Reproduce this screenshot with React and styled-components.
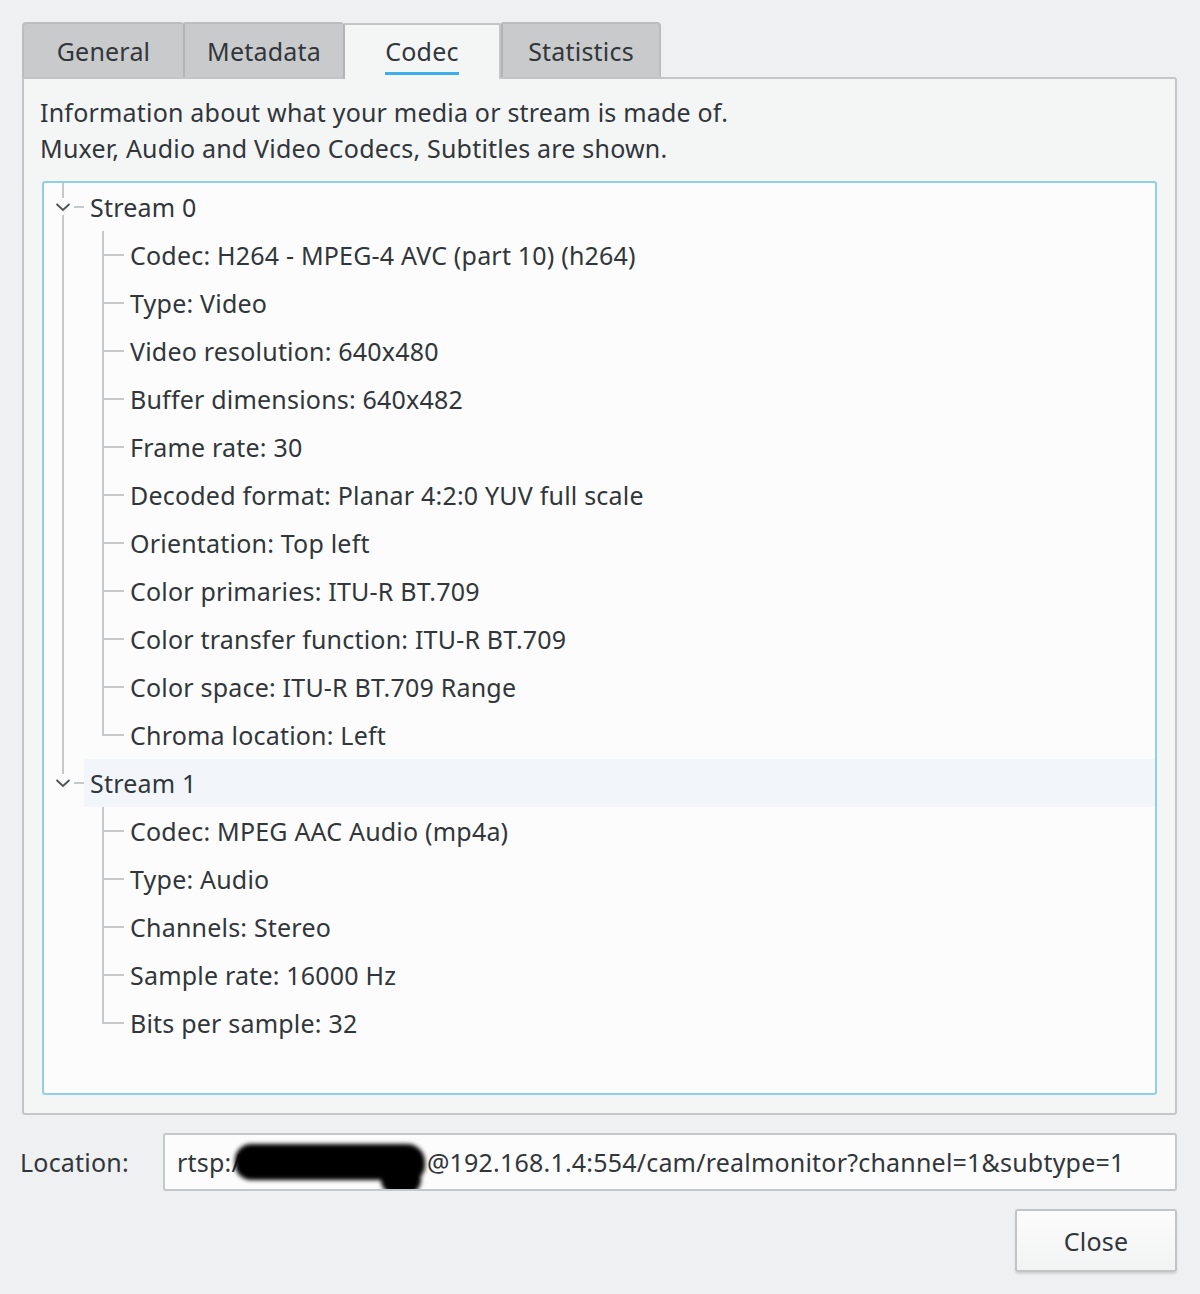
import React from 'react';
import styled, { createGlobalStyle } from 'styled-components';

const GlobalStyle = createGlobalStyle`
  html, body {
    margin: 0;
    padding: 0;
    background: #eff0f1;
  }
  body {
    font-family: 'Noto Sans', 'Open Sans', sans-serif;
    font-size: 25px;
    letter-spacing: 0.2px;
    color: #31363b;
  }
`;

const Dialog = styled.div`
  width: 1200px;
  height: 1294px;
  box-sizing: border-box;
  padding: 22px 23px 22px 22px;
  display: flex;
  flex-direction: column;
  background: #eff0f1;
`;

const TabBar = styled.div`
  display: flex;
  height: 55px;
`;

const Tab = styled.div`
  width: ${(p) => p.width}px;
  box-sizing: border-box;
  display: flex;
  align-items: center;
  justify-content: center;
  position: relative;
  background: ${(p) => (p.active ? '#f4f5f5' : '#c9cacb')};
  border: 2px solid ${(p) => (p.active ? '#c4c5c6' : '#bcbdbe')};
  border-bottom: none;
  border-left-width: ${(p) => (p.first || p.active ? 2 : 0)}px;
  border-right-width: ${(p) => (p.active ? 2 : 0)}px;
  border-top-left-radius: ${(p) => (p.first ? 4 : 2)}px;
  border-top-right-radius: ${(p) => (p.last ? 4 : 2)}px;
  border-right: ${(p) => (p.last ? '2px solid #bcbdbe' : undefined)};
  margin-top: ${(p) => (p.active ? 1 : 0)}px;
  z-index: ${(p) => (p.active ? 1 : 0)};
  margin-bottom: ${(p) => (p.active ? -2 : 0)}px;
  padding-bottom: ${(p) => (p.active ? 2 : 0)}px;
  & + & {
    border-left: 2px solid ${(p) => (p.active ? '#c4c5c6' : '#b3b4b5')};
  }
`;

const TabLabel = styled.span`
  position: relative;
  line-height: 30px;
  &::after {
    content: '';
    display: ${(p) => (p.active ? 'block' : 'none')};
    position: absolute;
    left: 0;
    right: 0;
    bottom: -9px;
    height: 3px;
    background: #3daee9;
  }
`;

const Panel = styled.div`
  flex: 1;
  display: flex;
  flex-direction: column;
  background: #f4f5f5;
  border: 2px solid #c4c5c6;
  border-radius: 0 3px 3px 3px;
  padding: 15px 18px 18px 16px;
  min-height: 0;
`;

const Description = styled.p`
  margin: 0 0 15px 0;
  line-height: 36px;
`;

const TreeBox = styled.div`
  flex: 1;
  margin-left: 2px;
  background: #fcfcfc;
  border: 2px solid #93cee9;
  border-radius: 3px;
  overflow: hidden;
`;

const Row = styled.div`
  display: flex;
  height: 48px;
  align-items: stretch;
`;

const Branch = styled.div`
  width: 40px;
  flex: none;
  position: relative;
`;

const VLine = styled.div`
  position: absolute;
  left: ${(p) => p.x}px;
  top: ${(p) => p.top}px;
  ${(p) => (p.bottom != null ? `bottom: ${p.bottom}px;` : `height: ${p.h}px;`)}
  width: 2px;
  background: #c7c8c9;
`;

const HLine = styled.div`
  position: absolute;
  left: ${(p) => p.x}px;
  right: 0;
  top: 23px;
  height: 2px;
  background: #c7c8c9;
`;

const Chevron = styled.svg`
  position: absolute;
  left: 11px;
  top: 19px;
`;

const Label = styled.div`
  flex: 1;
  display: flex;
  align-items: center;
  padding-left: 6px;
  background: ${(p) => (p.hover ? '#f2f6fa' : 'transparent')};
  border-radius: 2px;
  white-space: nowrap;
`;

const LocationRow = styled.div`
  display: flex;
  align-items: center;
  margin-top: 18px;
  height: 58px;
`;

const LocationLabel = styled.span`
  width: 143px;
  margin-left: -2px;
  flex: none;
`;

const Field = styled.div`
  flex: 1;
  height: 100%;
  box-sizing: border-box;
  background: #fcfcfc;
  border: 2px solid #c6c7c8;
  border-radius: 3px;
  display: flex;
  align-items: center;
  padding-left: 12px;
  white-space: nowrap;
  overflow: hidden;
`;

const Redact = styled.span`
  display: inline-block;
  position: relative;
  width: 190px;
  height: 36px;
  margin: 0 2px 0 -6px;
  background: #000;
  border-radius: 16px 18px 14px 16px;
  filter: blur(2px);
  vertical-align: middle;
  &::after {
    content: '';
    position: absolute;
    right: 4px;
    top: 14px;
    width: 40px;
    height: 36px;
    border-radius: 14px;
    background: #000;
  }
`;

const Footer = styled.div`
  display: flex;
  justify-content: flex-end;
  margin-top: 18px;
`;

const Button = styled.button`
  width: 162px;
  height: 63px;
  font-family: inherit;
  font-size: 25px;
  letter-spacing: 0.2px;
  color: #31363b;
  background: linear-gradient(#fcfcfc, #f2f3f3);
  border: 2px solid #c3c4c5;
  border-radius: 3px;
  box-shadow: 0 2px 2px rgba(0, 0, 0, 0.12);
`;

const tabs = [
  { name: 'General', width: 161 },
  { name: 'Metadata', width: 160 },
  { name: 'Codec', width: 158, active: true },
  { name: 'Statistics', width: 160 }
];

const streams = [
  {
    name: 'Stream 0',
    items: [
      'Codec: H264 - MPEG-4 AVC (part 10) (h264)',
      'Type: Video',
      'Video resolution: 640x480',
      'Buffer dimensions: 640x482',
      'Frame rate: 30',
      'Decoded format: Planar 4:2:0 YUV full scale',
      'Orientation: Top left',
      'Color primaries: ITU-R BT.709',
      'Color transfer function: ITU-R BT.709',
      'Color space: ITU-R BT.709 Range',
      'Chroma location: Left'
    ]
  },
  {
    name: 'Stream 1',
    hover: true,
    items: [
      'Codec: MPEG AAC Audio (mp4a)',
      'Type: Audio',
      'Channels: Stereo',
      'Sample rate: 16000 Hz',
      'Bits per sample: 32'
    ]
  }
];

const ChevronIcon = () => (
  <Chevron width='16' height='10' viewBox='0 0 16 10'>
    <path d='M1.5 2 L8 8 L14.5 2' fill='none' stroke='#4d5256' strokeWidth='1.8' />
  </Chevron>
);

const StreamRows = ({ stream, last }) => (
  <>
    <Row>
      <Branch>
        <VLine x={18} top={0} h={15} />
        {!last && <VLine x={18} top={32} bottom={0} />}
        <ChevronIcon />
        <HLine x={30} />
      </Branch>
      <Label hover={stream.hover}>{stream.name}</Label>
    </Row>
    {stream.items.map((item, i) => {
      const lastItem = i === stream.items.length - 1;
      return (
        <Row key={item}>
          <Branch>{!last && <VLine x={18} top={0} bottom={0} />}</Branch>
          <Branch>
            {lastItem ? <VLine x={18} top={0} h={25} /> : <VLine x={18} top={0} bottom={0} />}
            <HLine x={18} />
          </Branch>
          <Label>{item}</Label>
        </Row>
      );
    })}
  </>
);

const App = () => (
  <Dialog>
    <GlobalStyle />
    <TabBar>
      {tabs.map((t, i) => (
        <Tab
          key={t.name}
          width={t.width}
          active={t.active}
          first={i === 0}
          last={i === tabs.length - 1}>
          <TabLabel active={t.active}>{t.name}</TabLabel>
        </Tab>
      ))}
    </TabBar>
    <Panel>
      <Description>
        Information about what your media or stream is made of.
        <br />
        Muxer, Audio and Video Codecs, Subtitles are shown.
      </Description>
      <TreeBox>
        {streams.map((s, i) => (
          <StreamRows key={s.name} stream={s} last={i === streams.length - 1} />
        ))}
      </TreeBox>
    </Panel>
    <LocationRow>
      <LocationLabel>Location:</LocationLabel>
      <Field>
        rtsp:/
        <Redact />
        @192.168.1.4:554/cam/realmonitor?channel=1&amp;subtype=1
      </Field>
    </LocationRow>
    <Footer>
      <Button>Close</Button>
    </Footer>
  </Dialog>
);

export default App;
